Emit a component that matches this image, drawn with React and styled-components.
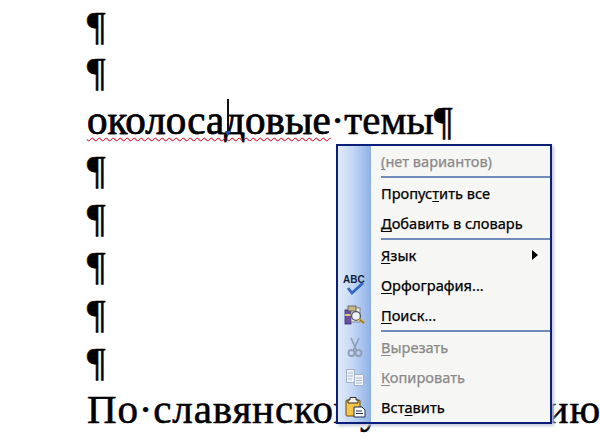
import React from "react";
import styled, { createGlobalStyle } from "styled-components";

const Global = createGlobalStyle`
  html, body { margin: 0; padding: 0; background: #fff; }
  body { width: 600px; height: 438px; overflow: hidden; }
`;

const Page = styled.div`
  position: relative;
  width: 600px;
  height: 438px;
  overflow: hidden;
  padding: 2px 0 0 87px;
  box-sizing: border-box;
  font-family: "Liberation Serif", serif;
  font-size: 41px;
  color: #000;
`;

const Line = styled.div`
  height: ${(p) => p.$h || 48}px;
  line-height: ${(p) => p.$h || 48}px;
  letter-spacing: ${(p) => p.$spacing || 0}px;
  white-space: nowrap;
  -webkit-text-stroke: 0.4px #000;
  text-shadow: -0.5px 0 rgba(150, 40, 40, 0.35), 0.5px 0 rgba(40, 60, 170, 0.35);
`;

const Misspelled = styled.span`
  position: relative;
  text-decoration: underline wavy #ee1c24 1.3px;
  text-decoration-skip-ink: none;
  text-underline-offset: 3px;
`;

const Caret = styled.span`
  position: absolute;
  left: 140px;
  top: 2px;
  width: 2px;
  height: 34px;
  background: #111;
  &::after {
    content: "";
    position: absolute;
    left: -2px;
    bottom: -3px;
    border-left: 3px solid transparent;
    border-right: 3px solid transparent;
    border-top: 5px solid #1c4fa0;
  }
`;

const Menu = styled.div`
  position: absolute;
  left: 336px;
  top: 144px;
  width: 216px;
  box-sizing: border-box;
  border: 2px solid #0a1f78;
  box-shadow: 2px 2px 3px #c4c8d8;
  background: linear-gradient(90deg, #e0ebfa 0%, #c4d7f4 45%, #8eb0e6 100%) left top / 33px 100% no-repeat, #f6f6f5;
  font-family: "Noto Sans", sans-serif;
  font-size: 14.6px;
  -webkit-text-stroke: 0.25px currentColor;
`;

const Item = styled.div`
  display: flex;
  align-items: center;
  height: 30px;
  padding-right: 12px;
  color: ${(p) => (p.$off ? "#8a8a8a" : "#000")};
  white-space: nowrap;
`;

const IconCell = styled.div`
  width: 33px;
  height: 30px;
  margin-right: 10px;
  display: flex;
  align-items: center;
  justify-content: center;
  flex: none;
`;

const Key = styled.span`
  text-decoration: underline;
  text-underline-offset: 2px;
`;

const Rule = styled.div`
  height: 2px;
  margin-left: 43px;
  background: #6f8cb8;
`;

const Arrow = styled.span`
  margin-left: auto;
  border-left: 6px solid #000;
  border-top: 5px solid transparent;
  border-bottom: 5px solid transparent;
`;

const SpellIcon = () => (
  <svg width="24" height="24" viewBox="0 0 24 24">
    <text x="0" y="10" fontFamily="Liberation Sans" fontWeight="700" fontSize="10" fill="#141c40">ABC</text>
    <path d="M5 15l4 5L20 10" fill="none" stroke="#3566c4" strokeWidth="2.8" />
  </svg>
);

const ResearchIcon = () => (
  <svg width="24" height="24" viewBox="0 0 24 24">
    <rect x="2" y="7" width="6" height="14" fill="#6a4fa8" stroke="#3b2a70" strokeWidth=".8" />
    <rect x="2" y="11" width="6" height="2" fill="#d8c878" />
    <rect x="8" y="5" width="9" height="14" fill="#f1efe2" stroke="#6c6c70" strokeWidth=".8" />
    <rect x="5" y="3" width="8" height="5" fill="#c9b880" stroke="#54525a" strokeWidth=".8" />
    <circle cx="13" cy="13" r="4.4" fill="#eef4fb" stroke="#4a5468" strokeWidth="1.3" />
    <path d="M16 16l5 4" stroke="#d8a028" strokeWidth="2.6" />
    <path d="M17 17l4 3" stroke="#5c4410" strokeWidth=".7" />
  </svg>
);

const CutIcon = () => (
  <svg width="24" height="24" viewBox="0 0 24 24" fill="none" stroke="#8f9fb8">
    <path d="M8 3l5.5 12M16 3l-5.5 12" strokeWidth="1.8" />
    <circle cx="8.5" cy="18" r="3" strokeWidth="1.8" />
    <circle cx="15.5" cy="18" r="3" strokeWidth="1.8" />
  </svg>
);

const CopyIcon = () => (
  <svg width="24" height="24" viewBox="0 0 24 24">
    <path d="M3.5 4.5h8v13h-8z" fill="#eef2f8" stroke="#a3afc4" />
    <path d="M11.5 9.5h9v11h-9z" fill="#f2f4f8" stroke="#a3afc4" />
    <path d="M5 8h5M5 11h5M5 14h4M13 13h6M13 15.5h6M13 18h6" stroke="#a8b4c8" />
  </svg>
);

const PasteIcon = () => (
  <svg width="24" height="24" viewBox="0 0 24 24">
    <rect x="3" y="5" width="14" height="16" rx="1" fill="#f3c548" stroke="#6a4c10" />
    <path d="M7 5V2.5h6V5h2v3H5V5z" fill="#f6f2e6" stroke="#33302a" />
    <path d="M11 12h8l3 3v7H11z" fill="#fff" stroke="#1c2c58" />
    <path d="M13 16h6M13 18.5h7" stroke="#1c2c58" />
  </svg>
);

export default function App() {
  return (
    <Page>
      <Global />
      <Line $h={46}>¶</Line>
      <Line $h={47}>¶</Line>
      <Line $h={50}>
        <Misspelled>
          околосадовые<Caret />
        </Misspelled>
        ·темы¶
      </Line>
      {[0, 1, 2, 3, 4].map((i) => (
        <Line key={i}>¶</Line>
      ))}
      <Line $spacing={0.85}>По·славянскому·мышлению</Line>

      <Menu>
        <Item $off>
          <IconCell />
          <span><Key>(</Key>нет вариантов)</span>
        </Item>
        <Rule />
        <Item>
          <IconCell />
          <span>Пропус<Key>т</Key>ить все</span>
        </Item>
        <Item>
          <IconCell />
          <span><Key>Д</Key>обавить в словарь</span>
        </Item>
        <Rule />
        <Item>
          <IconCell />
          <span><Key>Я</Key>зык</span>
          <Arrow />
        </Item>
        <Item>
          <IconCell><SpellIcon /></IconCell>
          <span><Key>О</Key>рфография...</span>
        </Item>
        <Item>
          <IconCell><ResearchIcon /></IconCell>
          <span><Key>П</Key>оиск...</span>
        </Item>
        <Rule />
        <Item $off>
          <IconCell><CutIcon /></IconCell>
          <span><Key>В</Key>ырезать</span>
        </Item>
        <Item $off>
          <IconCell><CopyIcon /></IconCell>
          <span><Key>К</Key>опировать</span>
        </Item>
        <Item>
          <IconCell><PasteIcon /></IconCell>
          <span>Вст<Key>а</Key>вить</span>
        </Item>
      </Menu>
    </Page>
  );
}
